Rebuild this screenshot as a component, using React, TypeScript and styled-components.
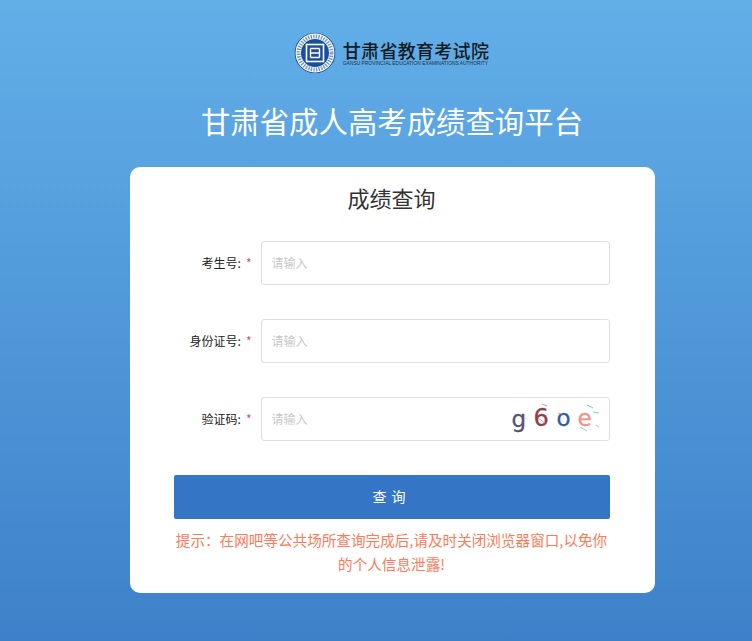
import { createGlobalStyle } from 'styled-components';
import styled from 'styled-components';

const GlobalStyle = createGlobalStyle`
  html, body {
    margin: 0;
    padding: 0;
  }
  body {
    font-family: "Noto Sans CJK SC", "Liberation Sans", sans-serif;
  }
  * {
    box-sizing: border-box;
  }
`;

const Page = styled.div`
  height: 641px;
  padding: 31px 0 0 34px;
  overflow: hidden;
  background: linear-gradient(180deg, #62afe8 0%, #3e81ca 100%);
  display: flex;
  flex-direction: column;
  align-items: center;
`;

const Brand = styled.div`
  display: flex;
  align-items: center;
  gap: 7px;
  height: 44px;
  margin-left: -3px;
`;

const BrandText = styled.div`
  display: flex;
  flex-direction: column;
  align-items: flex-start;
  color: #141b24;
`;

const BrandName = styled.div`
  font-size: 18px;
  line-height: 20px;
  font-weight: 500;
  letter-spacing: 0.3px;
  white-space: nowrap;
`;

const BrandSub = styled.div`
  font-family: "Liberation Sans", sans-serif;
  font-size: 4.9px;
  line-height: 7px;
  white-space: nowrap;
  color: #26303c;
`;

const Heading = styled.h1`
  margin: 20px 0 0 -2px;
  font-size: 29.4px;
  line-height: 50px;
  font-weight: 400;
  color: #ffffff;
  white-space: nowrap;
`;

const Card = styled.div`
  width: 525px;
  height: 426px;
  margin: 22px 0 0 -2px;
  padding: 13px 45px 0 44px;
  background: #ffffff;
  border-radius: 10px;
`;

const Title = styled.h2`
  margin: 0 0 27px;
  height: 34px;
  font-size: 22px;
  line-height: 34px;
  font-weight: 400;
  text-align: center;
  color: #333333;
`;

const Form = styled.form`
  display: flex;
  flex-direction: column;
  gap: 34px;
`;

const Row = styled.div`
  display: flex;
  align-items: center;
  height: 44px;
`;

const Label = styled.label`
  width: 87px;
  padding: 0 9px 2px 0;
  font-size: 12px;
  color: #222222;
  text-align: right;
  white-space: nowrap;
`;

const Star = styled.span`
  color: #e0457b;
  margin-left: 5px;
`;

const InputWrap = styled.div`
  position: relative;
  flex: 1;
  height: 44px;
`;

const Input = styled.input`
  width: 100%;
  height: 100%;
  padding: 0 10px 2px;
  border: 1px solid #dcdfe6;
  border-radius: 3px;
  outline: none;
  font-family: inherit;
  font-size: 12px;
  color: #333333;
  &::placeholder {
    color: #c8c8c8;
    opacity: 1;
  }
`;

const Captcha = styled.div`
  position: absolute;
  top: 1px;
  right: 1px;
  width: 100px;
  height: 42px;
`;

const CaptchaChar = styled.span<{ $left: number; $top: number; $size: number; $color: string }>`
  position: absolute;
  left: ${(p) => p.$left}px;
  top: ${(p) => p.$top}px;
  font-family: "DejaVu Sans", sans-serif;
  font-size: ${(p) => p.$size}px;
  line-height: 1;
  -webkit-text-stroke: 0.3px ${(p) => p.$color};
  color: ${(p) => p.$color};
`;

const CaptchaNoise = styled.svg`
  position: absolute;
  inset: 0;
`;

const Submit = styled.button`
  display: block;
  width: 100%;
  height: 44px;
  margin-top: 34px;
  padding: 0 0 2px;
  border: 0;
  border-radius: 2px;
  background: #3575c5;
  color: #ffffff;
  font-family: inherit;
  font-size: 14px;
  letter-spacing: 5px;
`;

const Tip = styled.p`
  margin: 9px 0 0;
  font-size: 14.6px;
  line-height: 24px;
  text-align: center;
  color: #ff7a59;
`;

const chars = [
  { c: 'g', left: 3, top: 10, size: 23, color: '#56507a' },
  { c: '6', left: 25, top: 8, size: 24, color: '#8f3f52' },
  { c: 'o', left: 48, top: 9, size: 23, color: '#2f5e94' },
  { c: 'e', left: 69, top: 9, size: 23, color: '#ee9488' },
];

const noise = [
  { d: 'M33 6 L38 8', color: '#c79be0' },
  { d: 'M49 15 L53 16', color: '#e6b37a' },
  { d: 'M78 7 L84 10', color: '#7cc4e6' },
  { d: 'M84 14 L90 15', color: '#6fd8b4' },
  { d: 'M71 29 L78 33', color: '#7fe0b0' },
  { d: 'M87 27 L90 29', color: '#8fdc9a' },
  { d: 'M29 20 L36 25', color: '#d8b27c' },
  { d: 'M16 20 L18 21', color: '#bfe6d8' },
];

const Logo = () => (
  <svg width="42" height="42" viewBox="0 0 42 42">
    <circle cx="21" cy="21" r="20.5" fill="#ffffff" />
    <circle cx="21" cy="21" r="20" fill="none" stroke="#1f5ea8" strokeWidth="1.2" />
    <circle cx="21" cy="21" r="16.5" fill="none" stroke="#6f95c4" strokeWidth="4" strokeDasharray="1.4 1.2" />
    <circle cx="21" cy="21" r="14" fill="#174f9b" />
    <rect x="12.5" y="12.5" width="17" height="17" fill="none" stroke="#ffffff" strokeWidth="1.6" />
    <path d="M16.5 16.5v9M25.5 16.5v9M16.5 16.5h9M16.5 21h9M16.5 25.5h9" fill="none" stroke="#ffffff" strokeWidth="1.4" />
  </svg>
);

export default function App() {
  return (
    <Page>
      <GlobalStyle />
      <Brand>
        <Logo />
        <BrandText>
          <BrandName>甘肃省教育考试院</BrandName>
          <BrandSub>GANSU PROVINCIAL EDUCATION EXAMINATIONS AUTHORITY</BrandSub>
        </BrandText>
      </Brand>
      <Heading>甘肃省成人高考成绩查询平台</Heading>
      <Card>
        <Title>成绩查询</Title>
        <Form onSubmit={(e) => e.preventDefault()}>
          <Row>
            <Label>
              考生号:<Star>*</Star>
            </Label>
            <InputWrap>
              <Input placeholder="请输入" />
            </InputWrap>
          </Row>
          <Row>
            <Label>
              身份证号:<Star>*</Star>
            </Label>
            <InputWrap>
              <Input placeholder="请输入" />
            </InputWrap>
          </Row>
          <Row>
            <Label>
              验证码:<Star>*</Star>
            </Label>
            <InputWrap>
              <Input placeholder="请输入" />
              <Captcha>
                {chars.map((ch) => (
                  <CaptchaChar key={ch.c} $left={ch.left} $top={ch.top} $size={ch.size} $color={ch.color}>
                    {ch.c}
                  </CaptchaChar>
                ))}
                <CaptchaNoise width="100" height="42" viewBox="0 0 100 42">
                  {noise.map((n) => (
                    <path key={n.d} d={n.d} stroke={n.color} strokeWidth="1" fill="none" />
                  ))}
                </CaptchaNoise>
              </Captcha>
            </InputWrap>
          </Row>
        </Form>
        <Submit type="submit">查询</Submit>
        <Tip>提示：在网吧等公共场所查询完成后,请及时关闭浏览器窗口,以免你的个人信息泄露!</Tip>
      </Card>
    </Page>
  );
}
